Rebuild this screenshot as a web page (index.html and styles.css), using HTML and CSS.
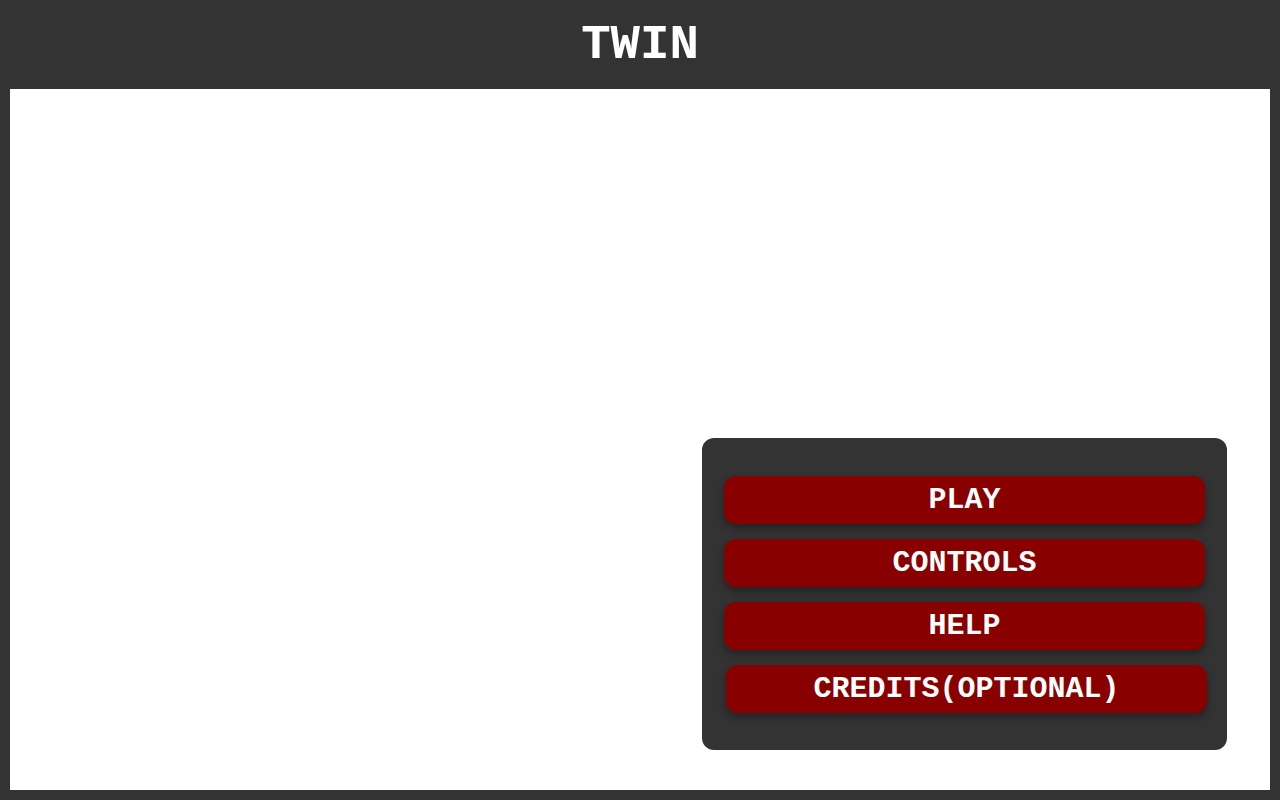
FILE: index.html
```html
<!DOCTYPE html>
<html>
<head>
<meta charset="utf-8">
<link rel="stylesheet" href="styles.css">
</head>
<body>
<header class="top"><h1 class="title">TWIN</h1></header>
<main class="stage">
  <div class="menu">
    <button class="btn">PLAY</button>
    <button class="btn">CONTROLS</button>
    <button class="btn">HELP</button>
    <button class="btn btn-shift">CREDITS(OPTIONAL)</button>
  </div>
</main>
</body>
</html>
```
FILE: styles.css
```css
html, body { margin: 0; padding: 0; }
body {
  background: #333333;
  width: 1280px;
  height: 800px;
  display: flex;
  flex-direction: column;
  font-family: "Courier New", "Liberation Mono", monospace;
  overflow: hidden;
}
.top {
  height: 89px;
  display: flex;
  align-items: center;
  justify-content: center;
}
.title {
  margin: 0;
  color: #ffffff;
  font-size: 49px;
  font-weight: bold;
}
.stage {
  margin: 0 10px 10px;
  background: #ffffff;
  flex: 1;
  display: flex;
  justify-content: flex-end;
  align-items: flex-end;
  padding: 0 43px 40px 0;
}
.menu {
  width: 481px;
  background: #333333;
  border-radius: 12px;
  padding: 38px 22px 37px;
  display: flex;
  flex-direction: column;
  gap: 15px;
}
.btn {
  height: 48px;
  border: none;
  border-radius: 12px;
  background: #880000;
  color: #ffffff;
  font-family: "Courier New", "Liberation Mono", monospace;
  font-weight: bold;
  font-size: 30px;
  line-height: 48px;
  box-shadow: 0 4px 8px rgba(0, 0, 0, 0.35);
  padding: 0;
}
.btn-shift { transform: translateX(2px); }
```
